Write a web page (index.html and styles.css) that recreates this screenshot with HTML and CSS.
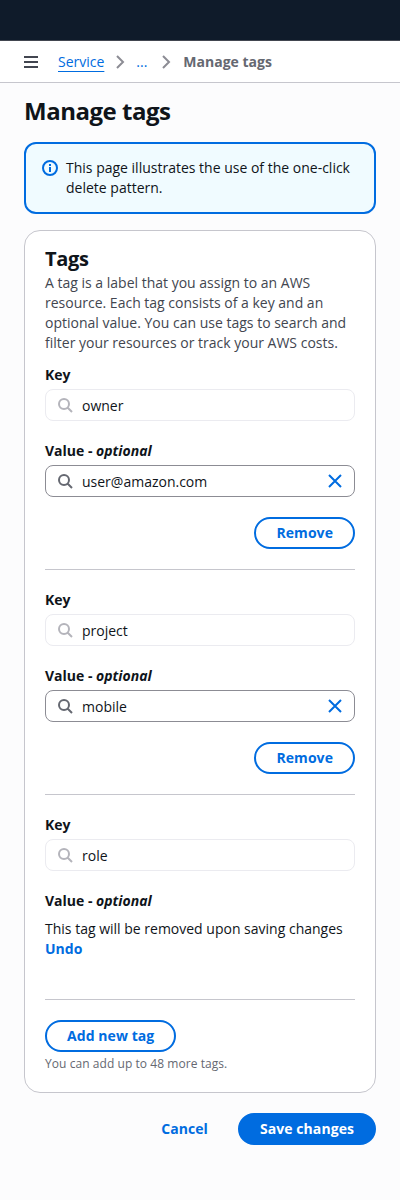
FILE: index.html
```
<!DOCTYPE html>
<html lang="en">
<head>
	<meta charset="UTF-8">
	<meta name="viewport" content="width=device-width, initial-scale=1.0">
	<title>Manage tags</title>
	<link rel="stylesheet" href="styles.css">
</head>
<body>
	<svg class="sprite" aria-hidden="true">
		<symbol id="icon-search" viewBox="0 0 16 16"><path d="m11 11 4 4M7 12A5 5 0 1 0 7 2a5 5 0 0 0 0 10Z"/></symbol>
		<symbol id="icon-close" viewBox="0 0 16 16"><path d="m2 2 12 12M14 2 2 14"/></symbol>
		<symbol id="icon-angle" viewBox="0 0 16 16"><path d="m5 2 6 6-6 6"/></symbol>
	</svg>

	<header class="top-bar"></header>

	<nav class="toolbar">
		<button class="menu-button" aria-label="Open navigation">
			<svg class="icon" viewBox="0 0 16 16"><path d="M1 3h14M1 8h14M1 13h14"/></svg>
		</button>
		<ol class="breadcrumbs">
			<li><a class="crumb-link" href="#">Service</a></li>
			<li><svg class="icon icon-angle"><use href="#icon-angle"/></svg></li>
			<li><a class="crumb-more" href="#">...</a></li>
			<li><svg class="icon icon-angle"><use href="#icon-angle"/></svg></li>
			<li class="crumb-current">Manage tags</li>
		</ol>
	</nav>

	<main>
		<h1>Manage tags</h1>

		<section class="alert">
			<svg class="icon" viewBox="0 0 16 16"><circle cx="8" cy="8" r="7"/><path d="M8 7v5M8 4v2"/></svg>
			<p>This page illustrates the use of the one-click delete pattern.</p>
		</section>

		<section class="container">
			<h2>Tags</h2>
			<p class="description">A tag is a label that you assign to an AWS resource. Each tag consists of a key and an optional value. You can use tags to search and filter your resources or track your AWS costs.</p>

			<div class="tag">
				<div class="label">Key</div>
				<div class="input disabled">
					<svg class="icon"><use href="#icon-search"/></svg>
					<span>owner</span>
				</div>
				<div class="label">Value - <i>optional</i></div>
				<div class="input">
					<svg class="icon"><use href="#icon-search"/></svg>
					<span>user@amazon.com</span>
					<svg class="icon icon-close"><use href="#icon-close"/></svg>
				</div>
				<div class="tag-action"><button class="button">Remove</button></div>
			</div>

			<div class="tag">
				<div class="label">Key</div>
				<div class="input disabled">
					<svg class="icon"><use href="#icon-search"/></svg>
					<span>project</span>
				</div>
				<div class="label">Value - <i>optional</i></div>
				<div class="input">
					<svg class="icon"><use href="#icon-search"/></svg>
					<span>mobile</span>
					<svg class="icon icon-close"><use href="#icon-close"/></svg>
				</div>
				<div class="tag-action"><button class="button">Remove</button></div>
			</div>

			<div class="tag tag-removed">
				<div class="label">Key</div>
				<div class="input disabled">
					<svg class="icon"><use href="#icon-search"/></svg>
					<span>role</span>
				</div>
				<div class="label">Value - <i>optional</i></div>
				<p class="removed-text">This tag will be removed upon saving changes <a class="undo" href="#">Undo</a></p>
			</div>

			<button class="button">Add new tag</button>
			<p class="hint">You can add up to 48 more tags.</p>
		</section>

		<div class="form-actions">
			<button class="button button-link">Cancel</button>
			<button class="button button-primary">Save changes</button>
		</div>
	</main>
</body>
</html>
```

FILE: styles.css
```
* {
	box-sizing: border-box;
}

body {
	margin: 0;
	font-family: "Open Sans", sans-serif;
	font-size: 14px;
	line-height: 20px;
	color: #0f141a;
	background-color: #fcfcfd;
}

h1, h2, p, ol {
	margin: 0;
	padding: 0;
}

a {
	color: #006ce0;
	text-decoration: none;
}

.sprite {
	display: none;
}

.icon {
	display: block;
	flex: none;
	width: 16px;
	height: 16px;
	fill: none;
	stroke: currentColor;
	stroke-width: 2px;
}

.top-bar {
	height: 41px;
	background-color: #0f1b2a;
	border-bottom: 1px solid #424650;
}

.toolbar {
	display: flex;
	align-items: center;
	height: 42px;
	padding: 0 23px;
	background-color: #fff;
	border-bottom: 1px solid #c6c6cd;
}

.menu-button {
	padding: 0;
	border: 0;
	background: none;
	color: #424650;
}

.breadcrumbs {
	display: flex;
	align-items: center;
	gap: 8px;
	margin-left: 19px;
	list-style: none;
}

.crumb-link {
	text-decoration: underline;
	text-decoration-thickness: 1px;
	text-underline-offset: 4px;
}

.crumb-more {
	display: block;
	width: 14px;
}

.crumb-current {
	padding-left: 1px;
	font-weight: 700;
	color: #656871;
}

.icon-angle {
	color: #8c8c94;
}

main {
	padding: 13px 24px 20px;
}

h1 {
	font-size: 24px;
	line-height: 30px;
	letter-spacing: -0.48px;
}

.alert {
	display: flex;
	gap: 8px;
	margin-top: 16px;
	padding: 14px 16px;
	border: 2px solid #006ce0;
	border-radius: 12px;
	background-color: #f0fbff;
}

.alert .icon {
	margin-top: 2px;
	color: #006ce0;
}

.container {
	margin-top: 16px;
	padding: 16px 20px 20px;
	border: 1px solid #c6c6cd;
	border-radius: 16px;
	background-color: #fff;
}

h2 {
	font-size: 20px;
	line-height: 24px;
	letter-spacing: -0.3px;
}

.description {
	padding-top: 2px;
	color: #424650;
}

.tag {
	height: 225px;
	padding-top: 20px;
	border-bottom: 1px solid #c6c6cd;
}

.description + .tag {
	height: 217px;
	padding-top: 12px;
}

.tag-removed {
	height: 205px;
	margin-bottom: 20px;
}

.label {
	font-weight: 700;
}

.input {
	display: flex;
	align-items: center;
	gap: 9px;
	height: 32px;
	margin-top: 4px;
	padding: 0 11px;
	border: 1px solid #8c8c94;
	border-radius: 8px;
}

.input span {
	padding-top: 2px;
}

.input .icon {
	color: #656871;
}

.input .icon-close {
	margin-left: auto;
	color: #006ce0;
}

.input.disabled {
	margin-bottom: 20px;
	border-color: #ebebf0;
}

.input.disabled .icon {
	color: #b4b4bb;
}

.tag-action {
	display: flex;
	justify-content: flex-end;
	margin-top: 20px;
}

.removed-text {
	margin-top: 8px;
}

.undo {
	font-weight: 700;
}

.button {
	display: block;
	height: 32px;
	padding: 0 20px;
	border: 2px solid #006ce0;
	border-radius: 20px;
	background-color: #fff;
	color: #006ce0;
	font: 700 14px/20px "Open Sans", sans-serif;
	letter-spacing: 0.07px;
}

.button-link {
	border-color: transparent;
	background-color: transparent;
}

.button-primary {
	background-color: #006ce0;
	color: #fff;
}

.hint {
	margin-top: 4px;
	font-size: 12px;
	line-height: 16px;
	letter-spacing: 0.06px;
	color: #656871;
}

.form-actions {
	display: flex;
	justify-content: flex-end;
	gap: 8px;
	margin-top: 20px;
}
```
